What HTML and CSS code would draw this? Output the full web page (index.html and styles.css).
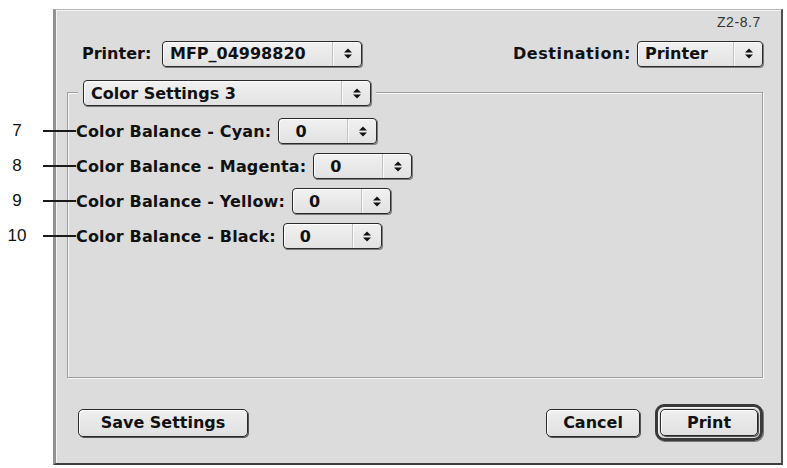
FILE: index.html
```html
<!DOCTYPE html>
<html lang="en">
<head>
<meta charset="utf-8">
<title>Print</title>
<link rel="stylesheet" href="styles.css">
</head>
<body>
<div class="dialog">
  <div class="doc-id">Z2-8.7</div>

  <div class="top-row">
    <div class="field">
      <span class="label label-printer">Printer:</span>
      <div class="popup popup-printer">
        <span class="popup-value">MFP_04998820</span>
        <span class="popup-arrows"><svg viewBox="0 0 8 11" width="8" height="11"><polygon points="0,4.5 4,0.5 8,4.5"/><polygon points="0,6.5 4,10.5 8,6.5"/></svg></span>
      </div>
    </div>
    <div class="field">
      <span class="label label-dest">Destination:</span>
      <div class="popup popup-dest">
        <span class="popup-value">Printer</span>
        <span class="popup-arrows"><svg viewBox="0 0 8 11" width="8" height="11"><polygon points="0,4.5 4,0.5 8,4.5"/><polygon points="0,6.5 4,10.5 8,6.5"/></svg></span>
      </div>
    </div>
  </div>

  <div class="group">
    <div class="group-head">
      <div class="popup popup-panel">
        <span class="popup-value">Color Settings 3</span>
        <span class="popup-arrows"><svg viewBox="0 0 8 11" width="8" height="11"><polygon points="0,4.5 4,0.5 8,4.5"/><polygon points="0,6.5 4,10.5 8,6.5"/></svg></span>
      </div>
    </div>

    <div class="settings">
      <div class="setting">
        <span class="callout"><span class="callout-num">7</span><span class="callout-line"></span></span>
        <span class="label">Color Balance - Cyan:</span>
        <div class="popup popup-level">
          <span class="popup-value">0</span>
          <span class="popup-arrows"><svg viewBox="0 0 8 11" width="8" height="11"><polygon points="0,4.5 4,0.5 8,4.5"/><polygon points="0,6.5 4,10.5 8,6.5"/></svg></span>
        </div>
      </div>
      <div class="setting">
        <span class="callout"><span class="callout-num">8</span><span class="callout-line"></span></span>
        <span class="label">Color Balance - Magenta:</span>
        <div class="popup popup-level">
          <span class="popup-value">0</span>
          <span class="popup-arrows"><svg viewBox="0 0 8 11" width="8" height="11"><polygon points="0,4.5 4,0.5 8,4.5"/><polygon points="0,6.5 4,10.5 8,6.5"/></svg></span>
        </div>
      </div>
      <div class="setting">
        <span class="callout"><span class="callout-num">9</span><span class="callout-line"></span></span>
        <span class="label">Color Balance - Yellow:</span>
        <div class="popup popup-level">
          <span class="popup-value">0</span>
          <span class="popup-arrows"><svg viewBox="0 0 8 11" width="8" height="11"><polygon points="0,4.5 4,0.5 8,4.5"/><polygon points="0,6.5 4,10.5 8,6.5"/></svg></span>
        </div>
      </div>
      <div class="setting">
        <span class="callout"><span class="callout-num">10</span><span class="callout-line"></span></span>
        <span class="label">Color Balance - Black:</span>
        <div class="popup popup-level">
          <span class="popup-value">0</span>
          <span class="popup-arrows"><svg viewBox="0 0 8 11" width="8" height="11"><polygon points="0,4.5 4,0.5 8,4.5"/><polygon points="0,6.5 4,10.5 8,6.5"/></svg></span>
        </div>
      </div>
    </div>
  </div>

  <div class="button-row">
    <button class="btn btn-save">Save Settings</button>
    <div class="button-group">
      <button class="btn btn-cancel">Cancel</button>
      <div class="default-ring"><button class="btn btn-print">Print</button></div>
    </div>
  </div>
</div>
</body>
</html>
```

FILE: styles.css
```css
* {
  box-sizing: border-box;
}

html, body {
  margin: 0;
  background: #ffffff;
}

body {
  padding: 9px 0 0 53px;
  font-family: "DejaVu Sans", sans-serif;
  font-weight: bold;
  font-size: 16px;
  color: #111;
}

/* dialog frame */
.dialog {
  width: 730px;
  height: 456px;
  background: #dcdcdc;
  border-top: 1px solid #b4b4b4;
  border-left: 3px solid #929292;
  border-right: 2px solid #4e4e4e;
  border-bottom: 2px solid #3e3e3e;
  box-shadow: inset 1px 1px 0 #f4f4f4;
  display: flex;
  flex-direction: column;
  padding: 0 18px 0 11px;
}

.doc-id {
  height: 14px;
  margin-top: 5px;
  line-height: 14px;
  text-align: right;
  padding-right: 2px;
  font-family: "Liberation Sans", sans-serif;
  font-weight: normal;
  font-size: 14px;
  letter-spacing: 0.6px;
  color: #333;
}

.top-row {
  margin-top: 11px;
  height: 27px;
  display: flex;
  justify-content: space-between;
  align-items: center;
  padding-left: 15px;
}

.field {
  display: flex;
  align-items: center;
  gap: 6px;
}

.label {
  white-space: nowrap;
}

.label-printer {
  min-width: 74px;
}

.label-dest {
  letter-spacing: 0.6px;
}

/* popup menus */
.popup {
  display: flex;
  align-items: stretch;
  height: 26px;
  border: 1px solid #2a2a2a;
  border-radius: 4px;
  background: linear-gradient(#f1f1f1, #e2e2e2);
  box-shadow: 1px 1px 0 #7c7c7c, inset 1px 1px 0 #ffffff;
  flex: none;
}

.popup-value {
  flex: 1;
  display: flex;
  align-items: center;
  padding-left: 7px;
  white-space: nowrap;
}

.popup-arrows {
  width: 28px;
  display: flex;
  align-items: center;
  justify-content: center;
  border-left: 1px solid #f8f8f8;
  box-shadow: -1px 0 0 #c4c4c4;
}

.popup-arrows svg {
  fill: #111;
}

.popup-printer {
  width: 200px;
}

.popup-dest {
  width: 126px;
}

.popup-panel {
  width: 288px;
}

.popup-level {
  width: 99px;
}

.popup-level .popup-value {
  padding-left: 16px;
}

/* group box */
.group {
  margin-top: 25px;
  height: 286px;
  border: 1px solid #9e9e9e;
  box-shadow: inset 1px 1px 0 #f7f7f7, 1px 1px 0 #f7f7f7;
  display: flex;
  flex-direction: column;
}

.group-head {
  align-self: flex-start;
  margin: -13px 0 0 10px;
  padding: 0 5px 0 5px;
  background: #dcdcdc;
}

.settings {
  margin-top: 12px;
  padding-left: 8px;
  display: flex;
  flex-direction: column;
  gap: 9px;
}

.setting {
  position: relative;
  display: flex;
  align-items: center;
  gap: 7px;
  height: 26px;
}

.setting .label {
  letter-spacing: 0.15px;
}

/* numbered callouts pointing at each row */
.callout {
  position: absolute;
  right: 100%;
  top: 50%;
  transform: translateY(-50%);
  width: 69px;
  display: flex;
  align-items: center;
}

.callout-num {
  width: 20px;
  text-align: center;
  font-family: "Liberation Sans", sans-serif;
  font-weight: normal;
  font-size: 17px;
  color: #111;
}

.callout-line {
  margin-left: 16px;
  flex: 1;
  height: 2px;
  background: #1a1a1a;
}

/* buttons */
.button-row {
  margin-top: 26px;
  height: 37px;
  display: flex;
  align-items: center;
  justify-content: space-between;
  padding-left: 11px;
}

.button-group {
  display: flex;
  align-items: center;
  gap: 15px;
}

.btn {
  font: inherit;
  color: #111;
  height: 28px;
  border: 1px solid #2a2a2a;
  border-radius: 5px;
  background: linear-gradient(#efefef, #e0e0e0);
  box-shadow: 1px 1px 0 #555, inset 1px 1px 0 #fff;
  padding: 0;
}

.btn-save {
  width: 170px;
}

.btn-cancel {
  width: 94px;
}

.default-ring {
  width: 108px;
  height: 37px;
  border: 3px solid #3a3a3a;
  border-radius: 9px;
  padding: 2px;
  display: flex;
  box-shadow: inset 1px 1px 0 #f4f4f4, 1px 1px 0 #777;
}

.btn-print {
  flex: 1;
  height: 27px;
}
```
